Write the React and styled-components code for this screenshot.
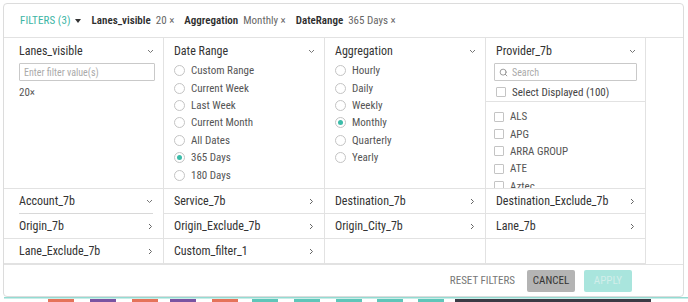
import React from "react";
import styled, { createGlobalStyle } from "styled-components";
import { Search } from "lucide-react";

const Global = createGlobalStyle`
  html, body { margin: 0; padding: 0; background: #fff; }
  body {
    font-family: "Roboto", "Liberation Sans", sans-serif;
    font-stretch: 78%;
    color: #333;
    -webkit-font-smoothing: antialiased;
  }
  * { box-sizing: border-box; }
`;

const Page = styled.div`
  width: 688px;
  height: 302px;
  overflow: hidden;
  padding: 3px 4px 0 3px;
  display: flex;
  flex-direction: column;
`;

const Panel = styled.div`
  height: 294px;
  flex: none;
  border: 1px solid #dcdcdc;
  border-radius: 4px;
  background: #fff;
  display: flex;
  flex-direction: column;
  overflow: hidden;
`;

const Header = styled.div`
  height: 34px;
  flex: none;
  border-bottom: 1px solid #e2e2e2;
  display: flex;
  align-items: center;
  padding-left: 16px;
  font-size: 11px;
  font-stretch: 82%;
`;

const FiltersLabel = styled.span`
  color: #3cb5a5;
  letter-spacing: 0.1px;
`;

const Caret = styled.span`
  display: inline-block;
  width: 0;
  height: 0;
  border-left: 3px solid transparent;
  border-right: 3px solid transparent;
  border-top: 4px solid #333;
  margin: 0 11px 0 4px;
`;

const Chip = styled.span`
  display: inline-flex;
  align-items: center;
  margin-right: 10px;
`;

const ChipLabel = styled.span`
  font-weight: 600;
  color: #2e2e2e;
  margin-right: 5px;
`;

const ChipValue = styled.span`
  color: #666;
`;

const Columns = styled.div`
  height: 151px;
  flex: none;
  display: grid;
  grid-template-columns: 160px 161px 161px 160px 1fr;
`;

const Column = styled.div`
  border-right: ${(p) => (p.$blank ? "none" : "1px solid #e2e2e2")};
  border-bottom: ${(p) => (p.$blank ? "none" : "1px solid #e2e2e2")};
  overflow: hidden;
  display: flex;
  flex-direction: column;
  & > * { flex: none; }
`;

const ColHead = styled.div`
  height: 14px;
  margin: 6px 0 0;
  padding: 0 9px 0 ${(p) => (p.$first ? "15px" : "10px")};
  display: flex;
  align-items: center;
  justify-content: space-between;
  font-size: 12px;
  font-stretch: 75%;
  color: #333;
`;

const Pad = styled.div`
  padding: 0 8px 0 ${(p) => (p.$first ? "15px" : "8px")};
`;

const TextInput = styled.div`
  margin-top: 5px;
  height: 18px;
  border: 1px solid #c9c9c9;
  border-radius: 1px;
  display: flex;
  align-items: center;
  gap: 4px;
  padding-left: 4px;
  font-size: 10px;
  color: #aaa;
`;

const Value = styled.div`
  margin-top: 5px;
  font-size: 11px;
  color: #555;
  line-height: 14px;
`;

const RadioList = styled.div`
  margin-top: 4px;
  padding-left: 10px;
  display: flex;
  flex-direction: column;
`;

const OptionRow = styled.div`
  height: 17.4px;
  flex: none;
  display: flex;
  align-items: center;
  gap: 6px;
  font-size: 11px;
  color: #555;
`;

const Radio = styled.span`
  width: 11px;
  height: 11px;
  border-radius: 50%;
  border: 1px solid #c4c4c4;
  display: flex;
  align-items: center;
  justify-content: center;
  flex: none;
  &::after {
    content: "";
    width: 5px;
    height: 5px;
    border-radius: 50%;
    background: ${(p) => (p.$on ? "#3cbca9" : "transparent")};
  }
`;

const Box = styled.span`
  width: 10px;
  height: 10px;
  border: 1px solid #c4c4c4;
  border-radius: 1px;
  flex: none;
`;

const SelectAll = styled.div`
  height: 21px;
  padding: 2px 8px 0 10px;
  display: flex;
  align-items: center;
  gap: 6px;
  font-size: 11px;
  color: #444;
  border-bottom: 1px solid #e2e2e2;
`;

const CheckList = styled.div`
  padding: 6px 8px 0 8px;
  display: flex;
  flex-direction: column;
`;

const Rows = styled.div`
  flex: none;
  display: grid;
  grid-template-columns: 160px 161px 161px 160px 1fr;
  grid-auto-rows: 25px;
`;

const Cell = styled.div`
  border-right: ${(p) => (p.$blank ? "none" : "1px solid #e2e2e2")};
  border-bottom: ${(p) => (p.$blank || p.$inset ? "none" : "1px solid #e2e2e2")};
  padding: 0 10px 0 ${(p) => (p.$first ? "15px" : "10px")};
  display: flex;
`;

const CellInner = styled.div`
  flex: 1;
  display: flex;
  align-items: center;
  justify-content: space-between;
  font-size: 12px;
  font-stretch: 75%;
  color: #333;
  border-bottom: ${(p) => (p.$inset ? "1px solid #d8d8d8" : "none")};
`;

const Footer = styled.div`
  flex: 1;
  border-top: 1px solid #e2e2e2;
  display: flex;
  align-items: center;
  justify-content: flex-end;
  padding-right: 51px;
  font-size: 11px;
`;

const TextButton = styled.span`
  color: #777;
  margin-right: 12px;
`;

const Button = styled.span`
  width: 48px;
  height: 22px;
  border-radius: 2px;
  display: flex;
  align-items: center;
  justify-content: center;
  background: ${(p) => (p.$primary ? "#a9e5dd" : "#b4b4b4")};
  color: ${(p) => (p.$primary ? "#d2eeea" : "#333")};
  margin-left: ${(p) => (p.$primary ? "9px" : "0")};
`;

const ChartPeek = styled.svg`
  display: block;
  flex: none;
  margin-left: -3px;
`;

const ChevronDown = () => (
  <svg width="7" height="5" viewBox="0 0 7 5">
    <path d="M1 1l2.5 2.5L6 1" fill="none" stroke="#777" strokeWidth="1" />
  </svg>
);

const ChevronRight = () => (
  <svg width="5" height="7" viewBox="0 0 5 7">
    <path d="M1 1l2.5 2.5L1 6" fill="none" stroke="#666" strokeWidth="1" />
  </svg>
);

const dateOptions = ["Custom Range", "Current Week", "Last Week", "Current Month", "All Dates", "365 Days", "180 Days"];
const aggOptions = ["Hourly", "Daily", "Weekly", "Monthly", "Quarterly", "Yearly"];
const providers = ["ALS", "APG", "ARRA GROUP", "ATE", "Aztec"];

const rows = [
  [{ t: "Account_7b", d: true }, { t: "Service_7b" }, { t: "Destination_7b" }, { t: "Destination_Exclude_7b" }],
  [{ t: "Origin_7b" }, { t: "Origin_Exclude_7b" }, { t: "Origin_City_7b" }, { t: "Lane_7b" }],
  [{ t: "Lane_Exclude_7b" }, { t: "Custom_filter_1" }, null, null],
];

const bars = [
  [48, "#e5735a"], [90, "#7a54a2"], [132, "#e5735a"], [170, "#7a54a2"], [212, "#e5735a"],
  [252, "#5fc6b9"], [294, "#5fc6b9"], [336, "#5fc6b9"], [377, "#5fc6b9"], [418, "#5fc6b9"],
];

export default function App() {
  return (
    <>
      <Global />
      <Page>
        <Panel>
          <Header>
            <FiltersLabel>FILTERS (3)</FiltersLabel>
            <Caret />
            <Chip><ChipLabel>Lanes_visible</ChipLabel><ChipValue>20 ×</ChipValue></Chip>
            <Chip><ChipLabel>Aggregation</ChipLabel><ChipValue>Monthly ×</ChipValue></Chip>
            <Chip><ChipLabel>DateRange</ChipLabel><ChipValue>365 Days ×</ChipValue></Chip>
          </Header>

          <Columns>
            <Column>
              <ColHead $first>Lanes_visible <ChevronDown /></ColHead>
              <Pad $first>
                <TextInput>Enter filter value(s)</TextInput>
                <Value>20×</Value>
              </Pad>
            </Column>
            <Column>
              <ColHead>Date Range <ChevronDown /></ColHead>
              <RadioList>
                {dateOptions.map((o) => (
                  <OptionRow key={o}><Radio $on={o === "365 Days"} />{o}</OptionRow>
                ))}
              </RadioList>
            </Column>
            <Column>
              <ColHead>Aggregation <ChevronDown /></ColHead>
              <RadioList>
                {aggOptions.map((o) => (
                  <OptionRow key={o}><Radio $on={o === "Monthly"} />{o}</OptionRow>
                ))}
              </RadioList>
            </Column>
            <Column>
              <ColHead>Provider_7b <ChevronDown /></ColHead>
              <Pad>
                <TextInput><Search size={9} color="#888" strokeWidth={2.2} />Search</TextInput>
              </Pad>
              <SelectAll><Box />Select Displayed (100)</SelectAll>
              <CheckList>
                {providers.map((p) => (
                  <OptionRow key={p}><Box />{p}</OptionRow>
                ))}
              </CheckList>
            </Column>
            <Column $blank />
          </Columns>

          <Rows>
            {rows.map((r, i) => (
              <React.Fragment key={i}>
                {r.map((c, j) => (
                  <Cell key={j} $first={j === 0} $inset={c && c.d}>
                    <CellInner $inset={c && c.d}>
                      {c ? c.t : ""}
                      {c ? (c.d ? <ChevronDown /> : <ChevronRight />) : null}
                    </CellInner>
                  </Cell>
                ))}
                <Cell $blank />
              </React.Fragment>
            ))}
          </Rows>

          <Footer>
            <TextButton>RESET FILTERS</TextButton>
            <Button>CANCEL</Button>
            <Button $primary>APPLY</Button>
          </Footer>
        </Panel>
        <ChartPeek width="688" height="6" viewBox="0 0 688 6">
          <rect x="4" y="0" width="684" height="1.5" fill="#94dbd2" />
          {bars.map(([x, c]) => (
            <rect key={x} x={x} y="2" width="26" height="4" fill={c} />
          ))}
          <rect x="455" y="2" width="196" height="4" fill="#3b3b45" />
        </ChartPeek>
      </Page>
    </>
  );
}
